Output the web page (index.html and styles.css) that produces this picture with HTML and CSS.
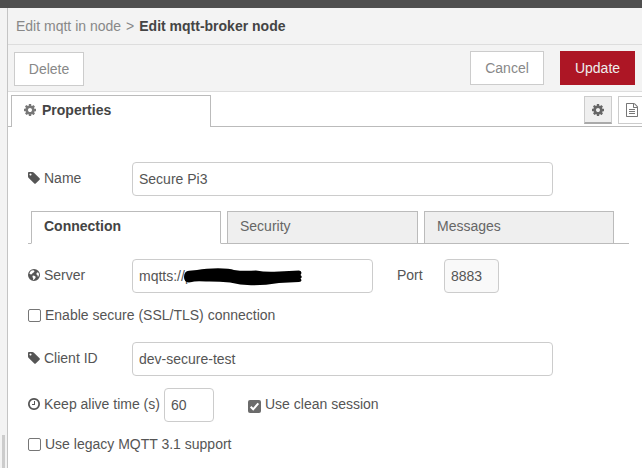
FILE: index.html
```html
<!DOCTYPE html>
<html lang="en">
<head>
<meta charset="utf-8">
<title>Edit mqtt-broker node</title>
<link rel="stylesheet" href="styles.css">
</head>
<body>
<svg class="defs" width="0" height="0" aria-hidden="true">
  <symbol id="cog" viewBox="128 0 1536 1792"><path d="M1152 896q0-106-75-181t-181-75-181 75-75 181 75 181 181 75 181-75 75-181zm512-109v222q0 12-8 23t-20 13l-185 28q-19 54-39 91 35 50 107 138 10 12 10 25t-9 23q-27 37-99 108t-94 71q-12 0-26-9l-138-108q-44 23-91 38-16 136-29 186-7 28-36 28h-222q-14 0-24.5-8.5t-11.5-21.5l-28-184q-49-16-90-37l-141 107q-10 9-25 9-14 0-25-11-126-114-165-168-7-10-7-23 0-12 8-23 15-21 51-66.5t54-70.5q-27-50-41-99l-183-27q-13-2-21-12.5t-8-23.5v-222q0-12 8-23t19-13l186-28q14-46 39-92-40-57-107-138-10-12-10-24 0-10 9-23 26-36 98.5-107.5t94.5-71.5q13 0 26 10l138 107q44-23 91-38 16-136 29-186 7-28 36-28h222q14 0 24.5 8.5t11.5 21.5l28 184q49 16 90 37l142-107q9-9 24-9 13 0 25 10 129 119 165 170 7 8 7 22 0 12-8 23-15 21-51 66.5t-54 70.5q26 50 41 98l183 28q13 2 21 12.5t8 23.5z"/></symbol>
  <symbol id="tag" viewBox="128 0 1536 1792"><path d="M576 448q0-53-37.5-90.5t-90.5-37.5-90.5 37.5-37.5 90.5 37.5 90.5 90.5 37.5 90.5-37.5 37.5-90.5zm1067 576q0 53-37 90l-491 492q-39 37-91 37-53 0-90-37l-715-716q-38-37-64.5-101t-26.5-117v-416q0-52 38-90t90-38h416q53 0 117 26.5t102 64.5l715 714q37 39 37 91z"/></symbol>
  <symbol id="clock" viewBox="128 0 1536 1792"><path d="M1024 544v448q0 14-9 23t-23 9h-320q-14 0-23-9t-9-23v-64q0-14 9-23t23-9h224v-352q0-14 9-23t23-9h64q14 0 23 9t9 23zm416 352q0-148-73-273t-198-198-273-73-273 73-198 198-73 273 73 273 198 198 273 73 273-73 198-198 73-273zm224 0q0 209-103 385.5t-279.5 279.5-385.5 103-385.5-103-279.5-279.5-103-385.5 103-385.5 279.5-279.5 385.5-103 385.5 103 279.5 279.5 103 385.5z"/></symbol>
  <symbol id="globe" viewBox="0 0 12 14"><path fill-rule="evenodd" d="M6 1a6 6 0 1 0 0 12A6 6 0 0 0 6 1zM2.200 3.700L3.600 2.600 5.400 2.300 6.600 2.900 5.900 4.200 4.800 5 3.900 6 3.300 6.500 2.200 6.300 1.400 5.600zM4.800 7.600L6.300 7.700 7.700 8.700 7.400 9.900 6.300 11.200 5.700 12 5.100 11.700 5.200 10.200 4.400 8.900zM8.500 4.900L9.800 4.300 10.700 5.100 11 6.600 10.600 8.300 9.800 8.700 9.500 7.300 8.500 6.600z"/></symbol>
  <symbol id="doc" viewBox="128 0 1536 1792"><path d="M1596 380q28 28 48 76t20 88v1152q0 40-28 68t-68 28h-1344q-40 0-68-28t-28-68v-1600q0-40 28-68t68-28h896q40 0 88 20t76 48zm-444-244v376h376q-10-29-22-41l-313-313q-12-12-41-22zm384 1528v-1024h-416q-40 0-68-28t-28-68v-416h-768v1536h1280zm-1024-864q0-14 9-23t23-9h704q14 0 23 9t9 23v64q0 14-9 23t-23 9h-704q-14 0-23-9t-9-23v-64zm736 224q14 0 23 9t9 23v64q0 14-9 23t-23 9h-704q-14 0-23-9t-9-23v-64q0-14 9-23t23-9h704zm0 256q14 0 23 9t9 23v64q0 14-9 23t-23 9h-704q-14 0-23-9t-9-23v-64q0-14 9-23t23-9h704z"/></symbol>
</svg>
<div class="topbar"></div>
<div class="main">
  <div class="gutter"><div class="thumb"></div></div>
  <div class="tray">
    <div class="crumbs"><span>Edit mqtt in node</span><span class="sep">&gt;</span><b>Edit mqtt-broker node</b></div>
    <div class="toolbar">
      <button class="btn delete">Delete</button>
      <button class="btn cancel">Cancel</button>
      <button class="btn update">Update</button>
    </div>
    <div class="tabbar">
      <div class="tab-main"><svg class="icon"><use href="#cog"/></svg><b>Properties</b></div>
      <button class="sq selected"><svg class="icon"><use href="#cog"/></svg></button>
      <button class="sq"><svg class="icon"><use href="#doc"/></svg></button>
    </div>
    <div class="form">
      <div class="row name">
        <label class="lbl"><svg class="icon"><use href="#tag"/></svg>Name</label>
        <div class="field wide">Secure Pi3</div>
      </div>
      <div class="tabs">
        <div class="tab active">Connection</div>
        <div class="tab">Security</div>
        <div class="tab last">Messages</div>
      </div>
      <div class="row server">
        <label class="lbl"><svg class="icon"><use href="#globe"/></svg>Server</label>
        <div class="field host">mqtts://p
          <svg class="scribble" viewBox="0 0 120 20"><path d="M0 9Q0 3 5 2.700L13 2Q22 .3 34 .3T50 2Q60 3.500 72 2.400Q80 4 90 3.700L115 2.500Q119 3.500 116.500 7Q119 9 116.500 10.500Q119 13.500 115 14L95 15Q80 17.500 67 17.200Q56 17 46 14.500Q34 13.300 22 13.500Q10 13 8 14Q0 16 0 9Z"/></svg>
        </div>
        <label class="port-lbl">Port</label>
        <div class="field port">8883</div>
      </div>
      <label class="check tls"><span class="box"></span>Enable secure (SSL/TLS) connection</label>
      <div class="row client">
        <label class="lbl"><svg class="icon"><use href="#tag"/></svg>Client ID</label>
        <div class="field wide">dev-secure-test</div>
      </div>
      <div class="row keep">
        <label class="lbl keep-lbl"><svg class="icon"><use href="#clock"/></svg>Keep alive time (s)</label>
        <div class="field secs">60</div>
        <label class="check clean"><span class="box on"><svg viewBox="0 0 13 13"><path d="M2.700 6.700L5.200 9.300L10.300 3.300"/></svg></span>Use clean session</label>
      </div>
      <label class="check legacy"><span class="box"></span>Use legacy MQTT 3.1 support</label>
    </div>
  </div>
</div>
</body>
</html>
```
FILE: styles.css
```css
* { box-sizing: border-box; }
body {
  margin: 0;
  height: 468px;
  overflow: hidden;
  display: flex;
  flex-direction: column;
  background: #fff;
  color: #555;
  font: 14px/20px "Liberation Sans", Arial, sans-serif;
}
.defs { position: absolute; }
.topbar { height: 8px; background: #4f4f4f; flex: none; }
.main { flex: 1; display: flex; }
.gutter {
  width: 8px;
  flex: none;
  display: flex;
  align-items: flex-end;
  background: #f3f3f3;
  border-right: 1px solid #c4c4c4;
  padding-left: 2px;
}
.thumb { width: 3px; height: 33px; background: #ccc; }
.tray { flex: 1; min-width: 0; }
.crumbs {
  height: 37px;
  padding: 8px 0 0 8px;
  background: #f3f3f3;
  border-bottom: 1px solid #ddd;
  color: #888;
  white-space: nowrap;
}
.crumbs b { color: #444; }
.sep { margin: 0 5px; }
.toolbar {
  height: 47px;
  display: flex;
  align-items: flex-start;
  padding: 6px 7px 0 6px;
  background: #f3f3f3;
  border-bottom: 1px solid #ddd;
}
.btn {
  height: 34px;
  padding: 0;
  border: 1px solid #ccc;
  background: #fff;
  color: #888;
  font: inherit;
}
.delete { width: 70px; margin: 1px auto 0 0; }
.cancel { width: 74px; margin-right: 16px; }
.update { width: 75px; background: #ad1625; border-color: #ad1625; color: #eee; }
.icon { width: 12px; height: 14px; fill: currentColor; flex: none; display: block; }
.tabbar {
  height: 35px;
  display: flex;
  padding: 3px 0 0 3px;
  overflow: hidden;
  background: linear-gradient(#bbb, #bbb) bottom / 100% 1px no-repeat;
}
.tab-main {
  width: 200px;
  height: 32px;
  display: flex;
  align-items: center;
  gap: 6px;
  padding: 0 0 3px 12px;
  margin-right: auto;
  border: 1px solid #bbb;
  border-bottom: 0;
  background: #fff;
  color: #444;
}
.tab-main .icon { color: #777; }
.sq {
  width: 28px;
  height: 28px;
  margin: 1px 6px 0 0;
  padding: 0;
  flex: none;
  display: flex;
  align-items: center;
  justify-content: center;
  border: 1px solid #ccc;
  background: #fff;
  color: #777;
}
.sq.selected { background: #efefef; border-bottom: 2px solid #aaa; color: #666; }
.sq:last-child { margin-right: -4px; }
.form { padding: 35px 0 0 20px; }
.row { display: flex; height: 34px; }
.lbl {
  width: 104px;
  height: 32px;
  display: flex;
  align-items: center;
  gap: 4px;
  flex: none;
  white-space: nowrap;
}
.keep-lbl { width: 136px; }
.field {
  height: 34px;
  padding: 6px;
  border: 1px solid #ccc;
  border-radius: 4px;
  background: #fff;
  position: relative;
}
.wide { width: 421px; }
.host { width: 241px; }
.port { width: 55px; background: #f9f9f9; }
.secs { width: 50px; }
.port-lbl { width: 71px; padding: 6px 0 0 24px; }
.scribble { position: absolute; left: 51px; top: 8px; width: 120px; height: 20px; fill: #000; }
.tabs {
  width: 601px;
  height: 33px;
  margin-top: 15px;
  padding-left: 3px;
  display: flex;
  gap: 6px;
  background: linear-gradient(#bbb, #bbb) bottom / 100% 1px no-repeat;
}
.tab {
  width: 191px;
  height: 33px;
  padding: 4px 12px;
  border: 1px solid #bbb;
  background: #efefef;
  color: #666;
}
.tab.last { width: 190px; }
.tab.active {
  width: 190px;
  border-bottom-color: #fff;
  background: #fff;
  color: #444;
  font-weight: bold;
}
.server { margin-top: 15px; }
.check { display: flex; align-items: center; height: 20px; gap: 4px; }
.tls { margin-top: 12px; }
.client { margin-top: 17px; }
.keep { margin-top: 12px; }
.legacy { margin-top: 12px; }
.clean { margin: 6px 0 0 34px; }
.box {
  width: 13px;
  height: 13px;
  margin-top: 1px;
  border: 1px solid #767676;
  border-radius: 2px;
  background: #fff;
}
.box.on { border: 0; background: #6b6b6b; margin-top: 5px; }
.box svg { display: block; width: 13px; height: 13px; fill: none; stroke: #fff; stroke-width: 2; }
```
